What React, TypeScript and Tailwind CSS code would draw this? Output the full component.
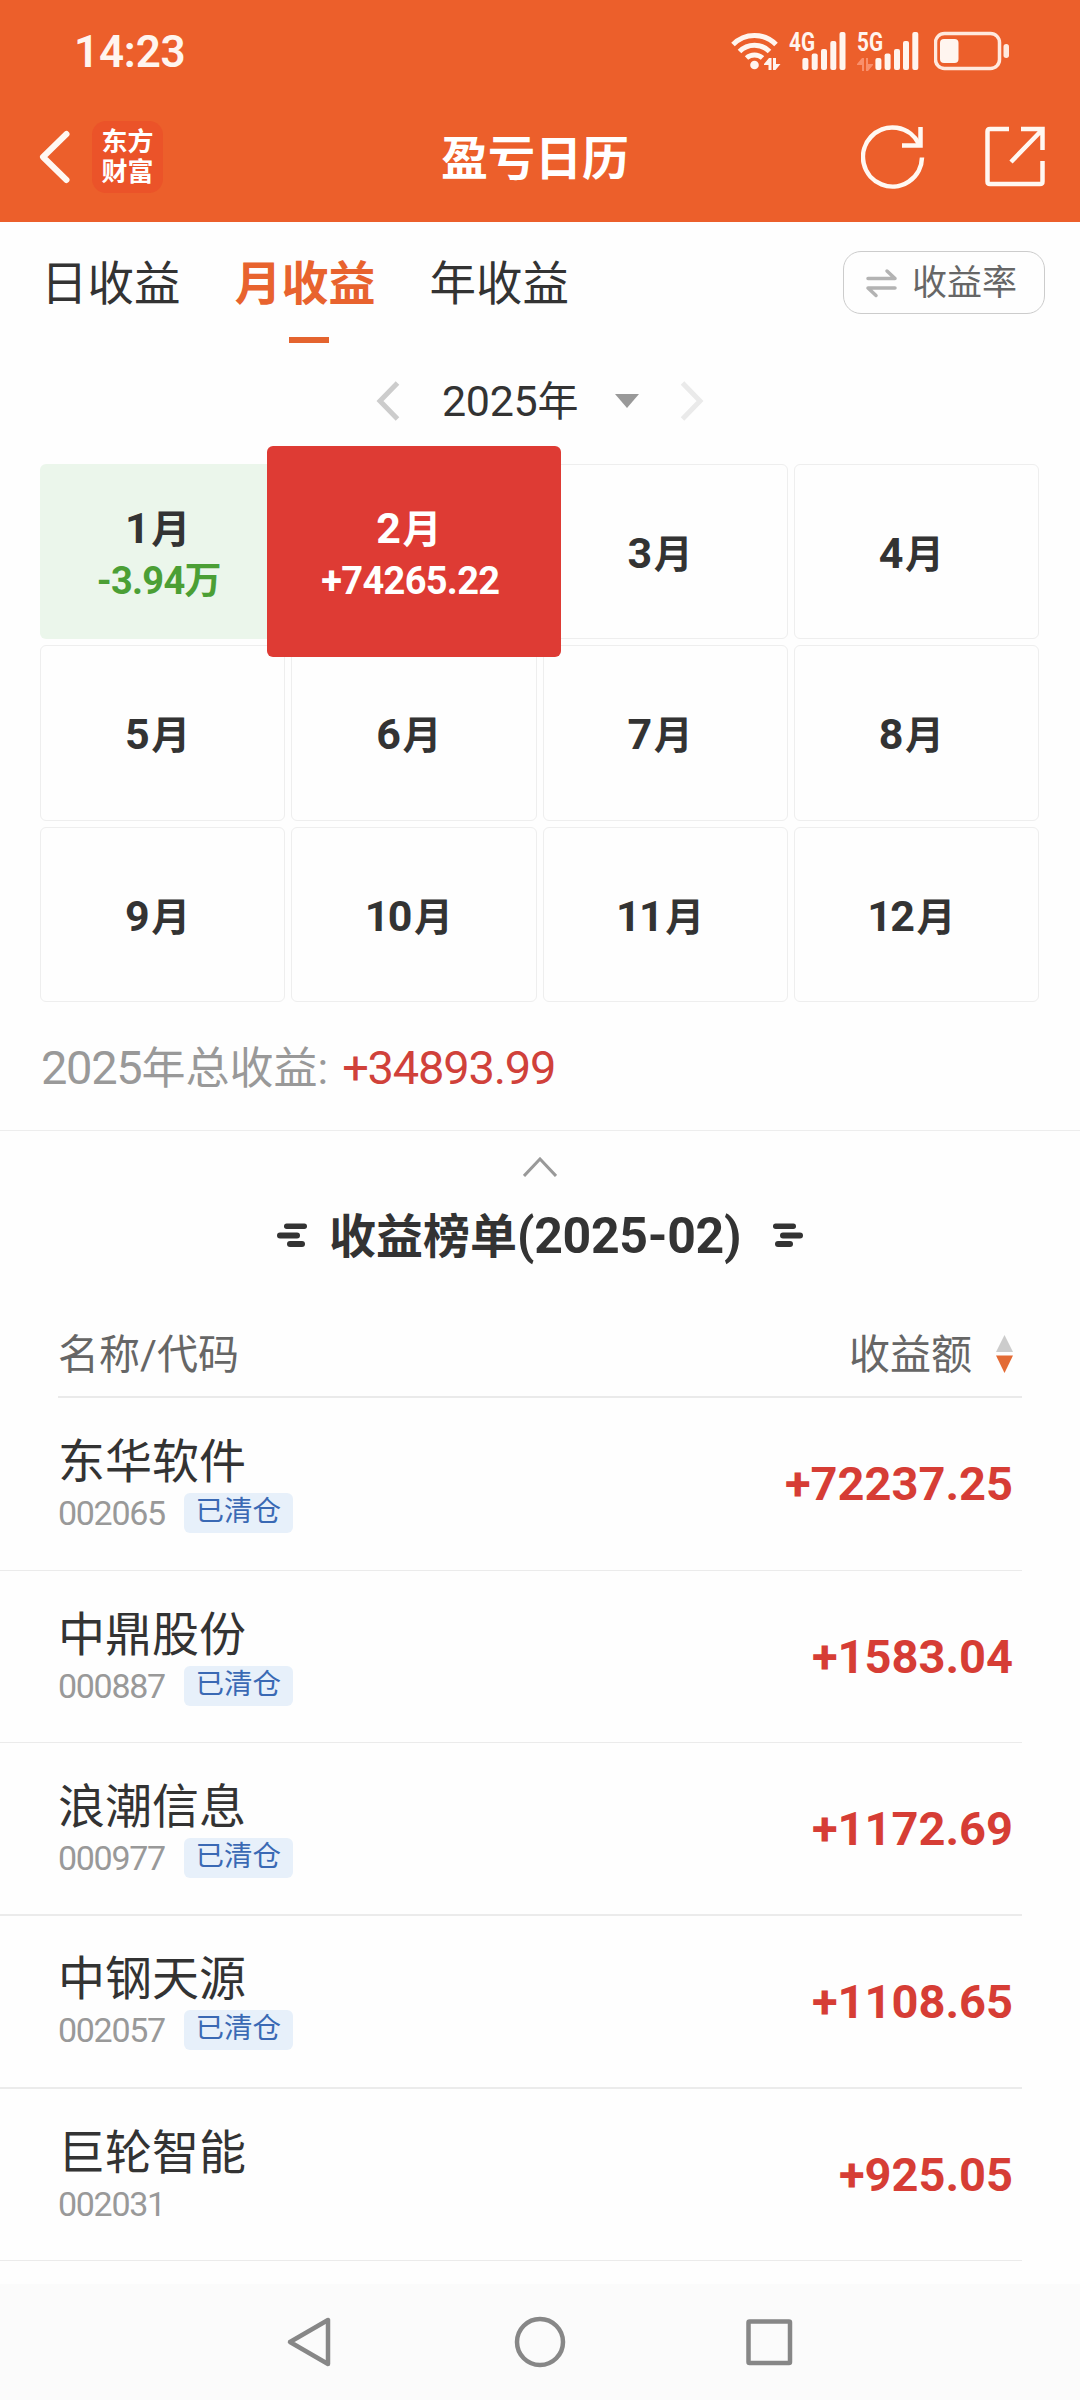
import { useState } from "react";

type Month = { label: number; value?: string; unit?: string };

const months: Month[] = [
  { label: 1, value: "-3.94", unit: "万" },
  { label: 2, value: "+74265.22" },
  ...Array.from({ length: 10 }, (_, i) => ({ label: i + 3 })),
];

const stocks = [
  { name: "东华软件", code: "002065", amount: "+72237.25", cleared: true },
  { name: "中鼎股份", code: "000887", amount: "+1583.04", cleared: true },
  { name: "浪潮信息", code: "000977", amount: "+1172.69", cleared: true, thick: true },
  { name: "中钢天源", code: "002057", amount: "+1108.65", cleared: true, thick: true },
  { name: "巨轮智能", code: "002031", amount: "+925.05", cleared: false },
];

const tabs = ["日收益", "月收益", "年收益"];

function Signal({ label, dim }: { label: string; dim?: boolean }) {
  return (
    <svg className="overflow-visible" width="63" height="40" viewBox="0 0 63 40" fill="#fff5ef">
      <text x="0" y="20" fontSize="26" fontWeight="700" textLength="26" lengthAdjust="spacingAndGlyphs">
        {label}
      </text>
      {dim && (
        <g fill="#f98f6b">
          <path d="M0 33l5-6h2v13H5v-6H0z" />
          <path d="M16 34l-5 6H9V27h2v6h5z" />
        </g>
      )}
      <rect x={dim ? 18.4 : 13.4} y="27" width="6" height="12" rx="2" />
      <rect x={dim ? 27.6 : 22.7} y="22.5" width="6" height="16.5" rx="2" />
      <rect x={dim ? 37 : 32} y="18" width="6" height="21" rx="2" />
      <rect x={dim ? 46 : 41.3} y="10" width="6" height="29" rx="2" />
      <rect x={dim ? 55.3 : 50.5} y="1" width="6" height="38" rx="2" />
    </svg>
  );
}

function StatusBar() {
  return (
    <div className="h-[102px] flex items-center justify-between pl-[74px] pr-[70px]">
      <span className="pt-[1px] text-[44px] leading-none font-semibold tracking-[-0.2px] text-[#fff5ef]">14:23</span>
      <div className="flex items-center">
        {/* wifi */}
        <svg width="50" height="40" viewBox="0 0 50 40" fill="none" stroke="#fff5ef" strokeWidth="5">
          <path d="M2 13.500a30 30 0 0 1 43 0" />
          <path d="M8.500 20.500a21 21 0 0 1 30 0" />
          <path d="M15.500 27a12 12 0 0 1 16 0" />
          <circle cx="23.500" cy="34" r="4.300" fill="#fff5ef" stroke="none" />
          <g fill="#fff5ef" stroke="none">
            <path d="M33 33l5-6h2.500v12h-3v-5H33z" />
            <path d="M49.500 33l-5 6H42V27h3v6h4.500z" />
          </g>
        </svg>
        <div className="ml-2 flex gap-[5px]">
          <Signal label="4G" />
          <Signal label="5G" dim />
        </div>
        <svg className="ml-[14px]" width="76" height="40" viewBox="0 0 76 40" fill="none">
          <rect x="1.500" y="2.500" width="64" height="35" rx="9" stroke="#ffe9de" strokeWidth="3.500" />
          <rect x="6" y="8" width="18.500" height="24" rx="4" fill="#fff5ef" />
          <rect x="69.500" y="13" width="5.500" height="14" rx="2.700" fill="#ffe9de" />
        </svg>
      </div>
    </div>
  );
}

function Header() {
  return (
    <div className="h-[120px] pb-[10px] pl-[38px] pr-[34px] flex items-center">
      <svg width="34" height="56" viewBox="0 0 34 56" fill="none" stroke="#fff8f2" strokeWidth="6" strokeLinecap="round" strokeLinejoin="round">
        <path d="M28.500 5L5 28l23.500 23" />
      </svg>
      <div className="ml-5 w-[71px] h-[72px] rounded-[14px] bg-[#eb5329] flex flex-col items-center justify-center text-[26px] leading-[30px] font-bold text-white">
        <span>东方</span>
        <span>财富</span>
      </div>
      <h1 className="ml-[278px] pt-[2px] text-[47px] leading-none font-bold text-white">盈亏日历</h1>
      <svg className="ml-auto" width="64" height="64" viewBox="0 0 64 64" fill="none" stroke="#fff8f2" strokeWidth="4.500">
        <path d="M61 32.500A29.500 29.500 0 1 1 58 19" />
        <path d="M59.500 2v18.500H41" />
      </svg>
      <svg className="ml-[59px]" width="62" height="62" viewBox="0 0 62 62" fill="none" stroke="#fff8f2" strokeWidth="4.500">
        <path d="M25 3H6Q3.500 3 3.500 5.500v50Q3.500 58 6 58h50q2.500 0 2.500-2.500V35" />
        <path d="M37 3h21.500v21M58 4L27 36" />
      </svg>
    </div>
  );
}

function TabBar({ tab, setTab }: { tab: string; setTab: (t: string) => void }) {
  return (
    <div className="h-[122px] pl-[41px] pr-[35px] flex items-start justify-between">
      <div className="flex gap-[54px] pt-[35px]">
        {tabs.map((t) => (
          <button key={t} onClick={() => setTab(t)} className="flex flex-col items-center">
            <span className={t === tab ? "text-[47px] leading-[54px] font-bold text-[#e8632e]" : "text-[46.500px] leading-[54px] text-[#333]"}>
              {t}
            </span>
            {t === tab && <span className="mt-[26px] ml-[7px] w-10 h-[6px] bg-[#e4642f]" />}
          </button>
        ))}
      </div>
      <button className="mt-[29px] w-[202px] h-[63px] border border-[#ccc] rounded-[18px] flex items-center pl-[22px] text-[35px] text-[#666]">
        <svg width="31" height="30" viewBox="0 0 31 30" fill="none" stroke="#b3b3b3" strokeWidth="3.500" strokeLinecap="round" strokeLinejoin="round">
          <path d="M2 10.500h27l-8-7.500M29 20H2l8 7.500" />
        </svg>
        <span className="ml-[15px] pt-[2px] leading-none">收益率</span>
      </button>
    </div>
  );
}

function YearPicker() {
  return (
    <div className="h-[114px] pl-[376px] flex items-center">
      <svg width="24" height="40" viewBox="0 0 24 40" fill="none" stroke="#ccc" strokeWidth="5">
        <path d="M21.500 2L4 20l17.500 18" />
      </svg>
      <span className="ml-[42px] pt-[1px] text-[41px] leading-none text-[#333]">
        <span className="text-[43px] tracking-[-0.300px]">2025</span>年
      </span>
      <svg className="ml-[37px]" width="24" height="14" viewBox="0 0 24 14" fill="#999">
        <path d="M0 0h24L12 14z" />
      </svg>
      <svg className="ml-[41px]" width="24" height="40" viewBox="0 0 24 40" fill="none" stroke="#eaeaea" strokeWidth="5">
        <path d="M2.500 2L20 20 2.500 38" />
      </svg>
    </div>
  );
}

function MonthCell({ month, active, onClick }: { month: Month; active: boolean; onClick: () => void }) {
  let box = "border border-[#eee] text-[#333]";
  if (month.value) box = "bg-[#ebf6eb] text-[#333]";
  if (active) box = "relative z-10 -mx-[24.5px] -my-[18px] bg-[#de3b34] text-white";

  return (
    <button onClick={onClick} className={`pt-[5px] rounded-[6px] font-bold flex flex-col items-center justify-center ${box}`}>
      <span className="mr-[10px] text-[39px] leading-[52px] flex items-baseline">
        <span className="text-[43px] tracking-[-1.500px] mr-[3px]">{month.label}</span>月
      </span>
      {month.value && (
        <span className={`mr-[7px] text-[37px] leading-[50px] whitespace-nowrap ${active ? "" : "text-[#4b9f35]"}`}>
          <span className="text-[38px] tracking-[-0.700px]">{month.value}</span>
          {month.unit}
        </span>
      )}
    </button>
  );
}

function RankIcon({ flip }: { flip?: boolean }) {
  return (
    <svg className={flip ? "-scale-x-100" : ""} width="30" height="24" viewBox="0 0 30 24" fill="#333">
      <rect x="7" y="0.500" width="23" height="5.500" rx="2.700" />
      <rect x="0" y="9.500" width="23" height="6" rx="3" />
      <rect x="10" y="18" width="18" height="6" rx="3" />
    </svg>
  );
}

export default function App() {
  const [tab, setTab] = useState("月收益");
  const [selected, setSelected] = useState(2);

  return (
    <div className="w-[1080px] h-[2400px] overflow-hidden flex flex-col bg-[#fefefe] font-[Roboto,'Noto_Sans_CJK_SC',sans-serif]">
      <header className="h-[222px] shrink-0 bg-[#ec5f2b]">
        <StatusBar />
        <Header />
      </header>

      <TabBar tab={tab} setTab={setTab} />
      <YearPicker />

      <div className="mt-[6px] pl-10 pr-[41px]">
        <div className="h-[538px] grid grid-cols-4 grid-rows-3 gap-[6px]">
          {months.map((m) => (
            <MonthCell key={m.label} month={m} active={m.label === selected} onClick={() => setSelected(m.label)} />
          ))}
        </div>
      </div>

      <div className="h-[129px] pt-[2px] pl-[41px] flex items-center border-b border-[#ededed] text-[44px] leading-none">
        <span className="text-[#999]">
          <span className="text-[47px] tracking-[-1.300px]">2025</span>年总收益:
        </span>
        <span className="ml-[14px] text-[47px] tracking-[-1.200px] text-[#d0413a]">+34893.99</span>
      </div>

      {/* Ranking */}
      <div className="pt-[26px] flex justify-center">
        <svg width="34" height="20" viewBox="0 0 34 20" fill="none" stroke="#999" strokeWidth="3">
          <path d="M1 19L17 2l16 17" />
        </svg>
      </div>
      <div className="h-[116px] flex items-center pl-[277px] text-[#333]">
        <RankIcon />
        <h2 className="ml-[22px] w-[411px] pt-[1px] text-[47px] leading-none font-bold whitespace-nowrap">
          收益榜单<span className="text-[50px] tracking-[-0.300px]">(2025-02)</span>
        </h2>
        <span className="ml-[33px]">
          <RankIcon flip />
        </span>
      </div>

      <div className="ml-[58px] mr-[58px] h-[105px] pb-[1px] border-b-2 border-[#eaeaea] flex items-end justify-between text-[41px] leading-[80px] text-[#666]">
        <span>名称/代码</span>
        <span className="flex items-center pr-[9px]">
          收益额
          <svg className="ml-[24px] mb-[2px]" width="17" height="38" viewBox="0 0 17 38">
            <path d="M8.500 0L17 17H0z" fill="#ccc" />
            <path d="M0 20.500h17L8.500 38z" fill="#e36b35" />
          </svg>
        </span>
      </div>

      <div className="mr-[58px]">
        {stocks.map((s) => (
          <div
            key={s.code}
            className={`h-[172.700px] pl-[58px] pr-[9px] border-[#ebebeb] flex items-center justify-between ${s.thick ? "border-b-2" : "border-b"}`}
          >
            <div>
              <div className="text-[47px] leading-[54px] text-[#333]">{s.name}</div>
              <div className="h-10 mt-1 flex items-center">
                <span className="text-[34px] leading-none tracking-[-1.300px] text-[#999]">{s.code}</span>
                {s.cleared && (
                  <span className="ml-[19px] w-[109px] h-10 rounded-[6px] bg-[#e7f0fa] text-center text-[28.500px] leading-[38px] text-[#3a69b4]">
                    已清仓
                  </span>
                )}
              </div>
            </div>
            <span className="text-[47px] leading-none font-bold text-[#d63d35]">{s.amount}</span>
          </div>
        ))}
      </div>

      <nav className="mt-auto h-[116px] shrink-0 bg-[#fbfbfb]">
        <svg width="1080" height="116" viewBox="0 0 1080 116" fill="none" stroke="#878787" strokeWidth="4.500" strokeLinejoin="round">
          <path d="M328 36v44L290 58z" />
          <circle cx="540" cy="58" r="23" />
          <rect x="748.500" y="37.500" width="41.500" height="41.500" rx="1" />
        </svg>
      </nav>
    </div>
  );
}
